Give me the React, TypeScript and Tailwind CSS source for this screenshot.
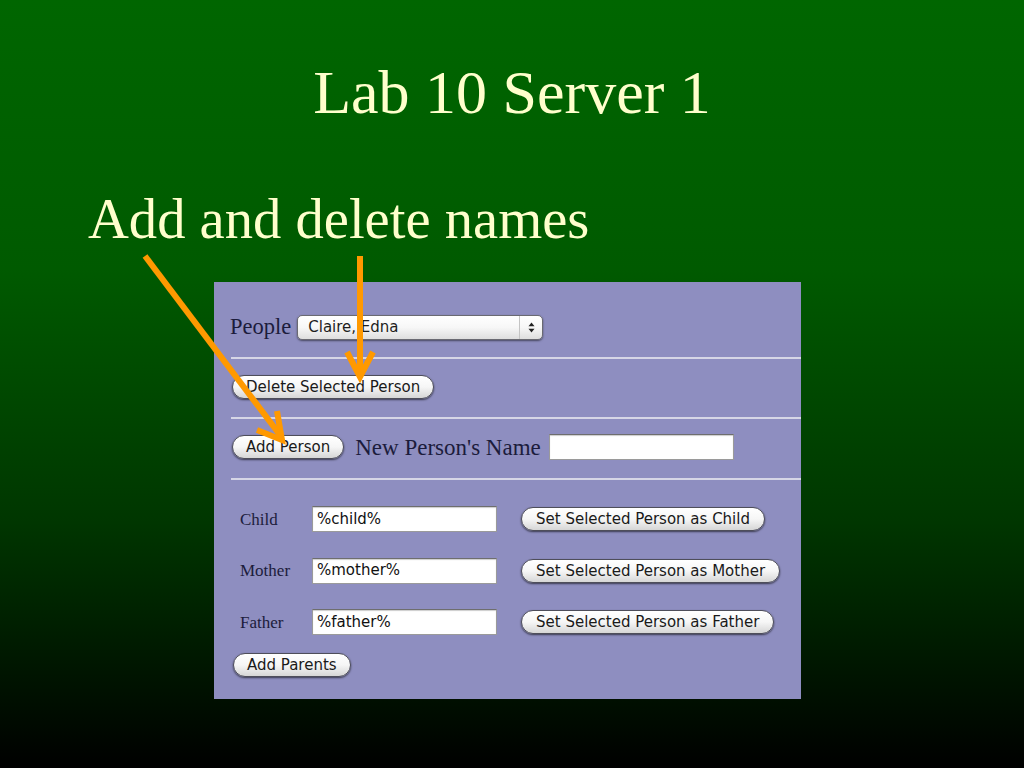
import React from "react";

const serif = { fontFamily: '"Liberation Serif", "Times New Roman", serif' };
const sans = { fontFamily: '"DejaVu Sans", Verdana, sans-serif' };

function AquaButton({ label, className = "" }: { label: string; className?: string }) {
  return (
    <button
      className={
        "h-[24px] px-[13px] rounded-full border border-[#4e4e5a] bg-gradient-to-b from-white via-[#f6f6f6] to-[#d6d6d6] shadow-[0_1px_2px_rgba(0,0,0,0.6)] text-[15px] leading-[22px] text-[#1a1a1a] whitespace-nowrap " +
        className
      }
      style={sans}
    >
      {label}
    </button>
  );
}

function TextBox({ value = "", className = "" }: { value?: string; className?: string }) {
  return (
    <div
      className={
        "h-[26px] w-[185px] bg-white border border-[#9a9a9a] border-t-[#6e6e6e] shadow-[inset_0_1px_1px_rgba(0,0,0,0.2)] pl-[4px] flex items-center text-[15px] text-[#111]" +
        " " +
        className
      }
      style={sans}
    >
      {value}
    </div>
  );
}

function Arrows() {
  return (
    <svg
      className="absolute left-0 top-0 pointer-events-none"
      width="1024"
      height="768"
      viewBox="0 0 1024 768"
    >
      <g stroke="#ff9900" strokeWidth="6" fill="none">
        <line x1="145" y1="256" x2="280" y2="435" />
        <polyline points="257,430 282,440 277,411" strokeLinejoin="miter" />
        <line x1="360" y1="256" x2="360" y2="374" />
        <polyline points="347,352 360,377 373,352" strokeLinejoin="miter" />
      </g>
    </svg>
  );
}

export default function App() {
  const relatives = [
    { name: "Child", value: "%child%" },
    { name: "Mother", value: "%mother%" },
    { name: "Father", value: "%father%" },
  ];

  return (
    <div className="relative w-[1024px] h-[768px] overflow-hidden bg-[linear-gradient(to_bottom,#006600_0%,#005a00_35%,#003600_68%,#000000_100%)]">
      <h1
        className="mt-[61px] text-center text-[62px] leading-[62px] text-[#ffffcc]"
        style={serif}
      >
        Lab 10 Server 1
      </h1>
      <h2
        className="mt-[68px] pl-[88px] text-[56.6px] leading-[56px] text-[#ffffcc]"
        style={serif}
      >
        Add and delete names
      </h2>

      <div className="ml-[214px] mt-[35px] w-[587px] h-[417px] bg-[#8e8ec0] flex flex-col items-start">
        {/* people select */}
        <div className="mt-[33px] ml-[16px] h-[25px] flex items-center gap-[6px]">
          <span className="text-[22.5px] leading-[22px] mb-[2px] text-[#1c1c3c]" style={serif}>
            People
          </span>
          <div
            className="h-[25px] w-[246px] rounded-[5px] border border-[#6a6a72] bg-gradient-to-b from-white via-[#f7f7f7] to-[#dedede] shadow-[0_1px_2px_rgba(0,0,0,0.5)] flex items-center"
            style={sans}
          >
            <span className="flex-1 pl-[10px] text-[15px] text-[#1e1e1e]">Claire, Edna</span>
            <div className="w-[23px] h-full border-l border-[#c4c4c4] flex items-center justify-center">
              <svg width="7" height="11" viewBox="0 0 7 11">
                <path d="M3.5 0.5 L6.5 4.2 L0.5 4.2 Z" fill="#222" />
                <path d="M3.5 10.5 L6.5 6.8 L0.5 6.8 Z" fill="#222" />
              </svg>
            </div>
          </div>
        </div>

        <div className="mt-[17px] ml-[17px] self-stretch h-[2px] bg-[#d6d6e6]" />

        <AquaButton label="Delete Selected Person" className="mt-[16px] ml-[18px]" />

        <div className="mt-[18px] ml-[17px] self-stretch h-[2px] bg-[#d6d6e6]" />

        {/* add person */}
        <div className="mt-[15px] ml-[18px] h-[26px] flex items-center">
          <AquaButton label="Add Person" />
          <span
            className="ml-[11px] w-[194px] whitespace-nowrap text-[23px] leading-[23px] text-[#1c1c3c]"
            style={serif}
          >
            New Person's Name
          </span>
          <TextBox />
        </div>

        <div className="mt-[18px] ml-[17px] self-stretch h-[2px] bg-[#d6d6e6]" />

        {/* parents */}
        <div className="mt-[26px] ml-[26px] grid grid-cols-[72px_185px_auto] gap-y-[25.5px] items-center">
          {relatives.map((r) => (
            <React.Fragment key={r.name}>
              <span className="text-[17px] leading-[17px] text-[#1c1c3c]" style={serif}>
                {r.name}
              </span>
              <TextBox value={r.value} />
              <AquaButton
                label={`Set Selected Person as ${r.name}`}
                className="justify-self-start ml-[24px] px-[14px]"
              />
            </React.Fragment>
          ))}
        </div>

        <AquaButton label="Add Parents" className="mt-[18px] ml-[19px]" />
      </div>

      <Arrows />
    </div>
  );
}
